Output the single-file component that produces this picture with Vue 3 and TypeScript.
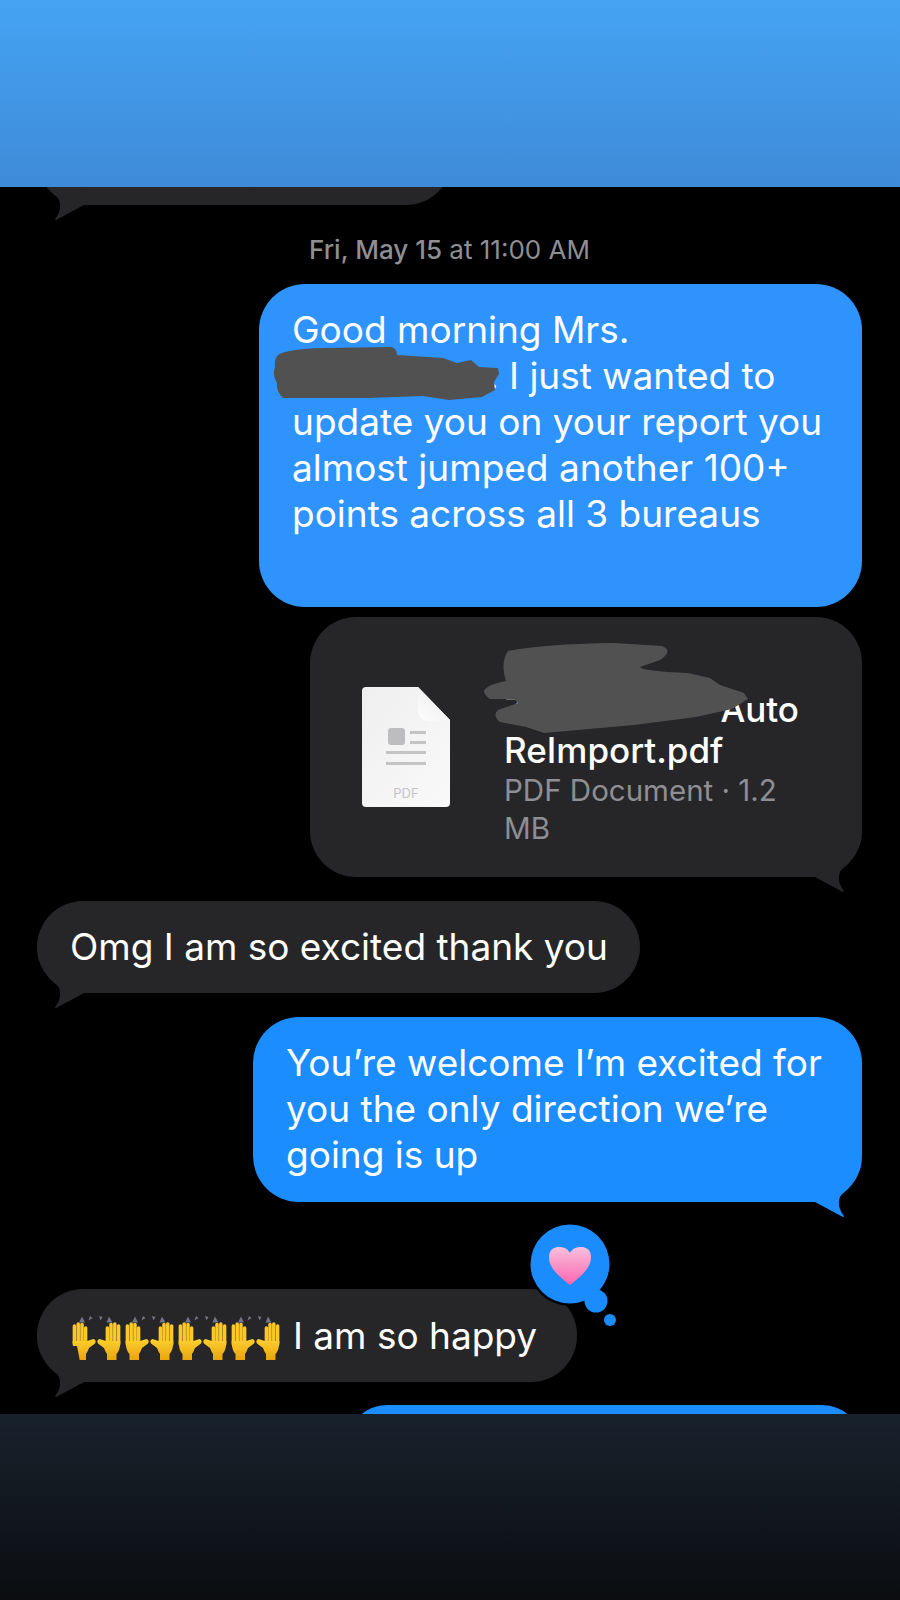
<script setup lang="ts">
const tailPath =
  'M3,36 L29,50 Q33,52 31.5,49.5 Q26,42 27,35 Q27,31 30,28 Q40,19 45,9 Q48,4 49,0 L10,0 Z'
const pairs = [0, 53, 106, 159]
const fingers = [
  { x: 2.4, top: 10 },
  { x: 6.2, top: 8 },
  { x: 10, top: 8.5 },
  { x: 13.6, top: 12 },
]
</script>

<template>
  <div class="screen">
    <header class="top-bar"></header>

    <main class="chat">
      <div class="bubble in cut-off">
        <svg class="tail" viewBox="0 0 50 52"><path :d="tailPath" /></svg>
      </div>

      <div class="timestamp"><b>Fri, May 15</b> at 11:00 AM</div>

      <div class="bubble out first">
        Good morning Mrs.<br />
        <span class="name-gap"></span>. I just wanted to<br />
        update you on your report you<br />
        almost jumped another 100+<br />
        points across all 3 bureaus
        <svg class="scribble name-scribble" viewBox="0 0 226 53">
          <path
            d="M5,8 Q14,2 50,1 L118,0 Q124,1 124,8 L170,11 L184,16 L198,13 L206,20 L225,21 L226,27 L221,35 L222,43 L209,50 L176,53 L150,49 L94,51 L10,51 Q3,44 4,36 Q-1,28 2,20 Q1,12 5,8 Z"
          />
        </svg>
      </div>

      <div class="bubble file">
        <svg class="doc" viewBox="0 0 88 120">
          <defs>
            <linearGradient id="docFill" x1="0" y1="0" x2="1" y2="1">
              <stop offset="0" stop-color="#efeff0" />
              <stop offset="1" stop-color="#f9f9f9" />
            </linearGradient>
            <linearGradient id="foldFill" x1="0" y1="1" x2="1" y2="0">
              <stop offset="0" stop-color="#ffffff" />
              <stop offset="1" stop-color="#e6e6e8" />
            </linearGradient>
          </defs>
          <path
            d="M4,0 H56 L88,33 V116 Q88,120 84,120 H4 Q0,120 0,116 V4 Q0,0 4,0 Z"
            fill="url(#docFill)"
          />
          <path d="M56,0 L88,33 V34 H68 Q56,34 56,22 Z" fill="url(#foldFill)" />
          <rect x="26" y="41" width="17" height="17" rx="3" fill="#bdbdbf" />
          <rect x="48" y="44" width="16" height="3" fill="#c4c4c6" />
          <rect x="48" y="54" width="16" height="3" fill="#c4c4c6" />
          <rect x="24" y="64" width="40" height="3" fill="#c4c4c6" />
          <rect x="24" y="75" width="40" height="3" fill="#c4c4c6" />
          <text x="44" y="111" class="doc-label" text-anchor="middle">PDF</text>
        </svg>
        <div class="file-text">
          <div class="file-name">
            <div class="name-line split"><span>Z</span><span>Auto</span></div>
            <div class="name-line">ReImport.pdf</div>
          </div>
          <div class="file-meta">PDF Document · 1.2<br />MB</div>
        </div>
        <svg class="scribble file-scribble" viewBox="0 0 264 90">
          <path
            d="M24,8 Q60,1 130,0 L178,3 Q190,8 176,17 L156,24 Q158,28 204,30 L226,35 L236,42 L260,50 L264,56 L248,66 L212,74 L150,82 L60,90 L42,84 L16,79 Q8,72 14,67 L34,60 L30,56 L6,56 Q0,52 0,48 Q2,42 22,38 Q16,20 24,8 Z"
          />
        </svg>
        <svg class="tail" viewBox="0 0 50 52"><path :d="tailPath" /></svg>
      </div>

      <div class="bubble in thanks">
        Omg I am so excited thank you
        <svg class="tail" viewBox="0 0 50 52"><path :d="tailPath" /></svg>
      </div>

      <div class="bubble out welcome">
        You’re welcome I’m excited for<br />
        you the only direction we’re<br />
        going is up
        <svg class="tail" viewBox="0 0 50 52"><path :d="tailPath" /></svg>
      </div>

      <div class="bubble in happy">
        <svg class="hands" viewBox="0 0 212 48">
          <defs>
            <linearGradient id="handFill" x1="0" y1="0" x2="0" y2="1">
              <stop offset="0" stop-color="#fdd02f" />
              <stop offset="1" stop-color="#e9a40e" />
            </linearGradient>
            <g id="hand">
              <line
                v-for="f in fingers"
                :key="f.x"
                :x1="f.x"
                :y1="f.top"
                :x2="f.x"
                y2="28"
                stroke="#fcc826"
                stroke-width="3.5"
                stroke-linecap="round"
              />
              <path d="M0.6,25 H15 L21.5,23 Q25,24.5 23,27.5 L17,32 Q15.5,36 14,38 V44 H4.5 V38 Q0.6,34 0.6,25 Z" fill="url(#handFill)" />
            </g>
          </defs>
          <g v-for="x in pairs" :key="x" :transform="`translate(${x},0)`">
            <use href="#hand" />
            <use href="#hand" transform="translate(49,0) scale(-1,1)" />
            <path d="M7,6.5 L10,0.5 L13,6.5 Z M16.5,4.5 L18,0 L20.5,2 Z M27,0 L30.5,1 L28.5,4.5 Z M34.5,6.5 L37,0.5 L40.5,6.5 Z" fill="#74748a" />
          </g>
        </svg>
        <span>I am so happy</span>
        <svg class="tail" viewBox="0 0 50 52"><path :d="tailPath" /></svg>
        <svg class="tapback" viewBox="0 0 100 124">
          <defs>
            <linearGradient id="heartFill" x1="0" y1="0" x2="0" y2="1">
              <stop offset="0" stop-color="#f6c0dc" />
              <stop offset="1" stop-color="#ff65b0" />
            </linearGradient>
          </defs>
          <circle cx="40" cy="41" r="42" fill="#000" />
          <circle cx="66" cy="78" r="13.5" fill="#000" />
          <circle cx="40" cy="41" r="39.5" fill="#1b8cfe" />
          <circle cx="66" cy="78" r="11.5" fill="#1b8cfe" />
          <circle cx="80" cy="97" r="6" fill="#1b8cfe" />
          <path
            d="M40,62 C30,54 19,46 19,34 C19,26 25,24 29,24 C34,24 38,26 40,30 C42,26 46,24 51,24 C55,24 61,26 61,34 C61,46 50,54 40,62 Z"
            fill="url(#heartFill)"
          />
        </svg>
      </div>

      <div class="bubble out next"></div>
    </main>

    <footer class="bottom-bar"></footer>
  </div>
</template>

<style scoped>
.screen {
  width: 900px;
  height: 1600px;
  display: flex;
  flex-direction: column;
  background: #000;
  overflow: hidden;
  font-family: Inter, 'Liberation Sans', sans-serif;
}

.top-bar {
  height: 187px;
  flex: none;
  background: linear-gradient(#45a3f4, #3e8bd8);
}

.bottom-bar {
  height: 186px;
  flex: none;
  background: linear-gradient(#18222d, #0b0d10);
}

.chat {
  flex: 1;
  min-height: 0;
  overflow: hidden;
  display: flex;
  flex-direction: column;
  padding: 0 38px 0 37px;
}

.bubble {
  position: relative;
  flex: none;
  box-sizing: border-box;
  border-radius: 46px;
  padding: 23px 33px;
  font-size: 37px;
  line-height: 46px;
  white-space: nowrap;
  color: #fff;
}

.in {
  background: #262629;
  fill: #262629;
  align-self: flex-start;
}

.out {
  background: #1c8dfe;
  fill: #1c8dfe;
  align-self: flex-end;
}

.tail {
  position: absolute;
  right: 0;
  bottom: -16px;
  width: 50px;
  height: 52px;
}

.in .tail {
  right: auto;
  left: 0;
  transform: scaleX(-1);
}

.cut-off {
  width: 415px;
  height: 92px;
  margin-top: -74px;
}

.timestamp {
  flex: none;
  margin-top: 30px;
  height: 49px;
  line-height: 30px;
  text-align: center;
  font-size: 26px;
  color: #8e8e93;
}

.timestamp b {
  font-weight: 500;
}

.first {
  width: 603px;
  padding-bottom: 70px;
  background: #2f93fd;
}

.name-gap {
  display: inline-block;
  width: 196px;
}

.scribble {
  position: absolute;
  fill: #515151;
}

.name-scribble {
  left: 14px;
  top: 63px;
  width: 226px;
  height: 53px;
}

.file {
  width: 552px;
  height: 260px;
  margin-top: 10px;
  padding: 0 0 0 52px;
  align-self: flex-end;
  display: flex;
  align-items: center;
  gap: 54px;
  background: #262629;
  fill: #262629;
}

.doc {
  width: 88px;
  height: 120px;
  flex: none;
}

.doc-label {
  font-size: 13px;
  fill: #c4c4c6;
}

.file-text {
  width: 295px;
  padding-top: 41px;
}

.file-name {
  font-size: 35px;
  line-height: 41px;
  font-weight: 500;
}

.name-line {
  height: 41px;
}

.split {
  display: flex;
  justify-content: space-between;
}

.file-meta {
  font-size: 29.5px;
  line-height: 38px;
  color: #8e8e93;
}

.file-scribble {
  left: 174px;
  top: 26px;
  width: 264px;
  height: 90px;
}

.thanks {
  width: 603px;
  margin-top: 24px;
}

.welcome {
  width: 609px;
  margin-top: 24px;
  padding-bottom: 24px;
}

.happy {
  width: 540px;
  height: 93px;
  margin-top: 87px;
  padding: 0 0 0 35px;
  display: flex;
  align-items: center;
  gap: 9px;
}

.hands {
  width: 212px;
  height: 48px;
  flex: none;
  align-self: flex-start;
  margin-top: 27px;
}

.tapback {
  position: absolute;
  left: 493px;
  top: -66px;
  width: 100px;
  height: 124px;
}

.next {
  width: 515px;
  height: 80px;
  margin-top: 23px;
}
</style>

<style>
html,
body {
  background: #000;
}
</style>
